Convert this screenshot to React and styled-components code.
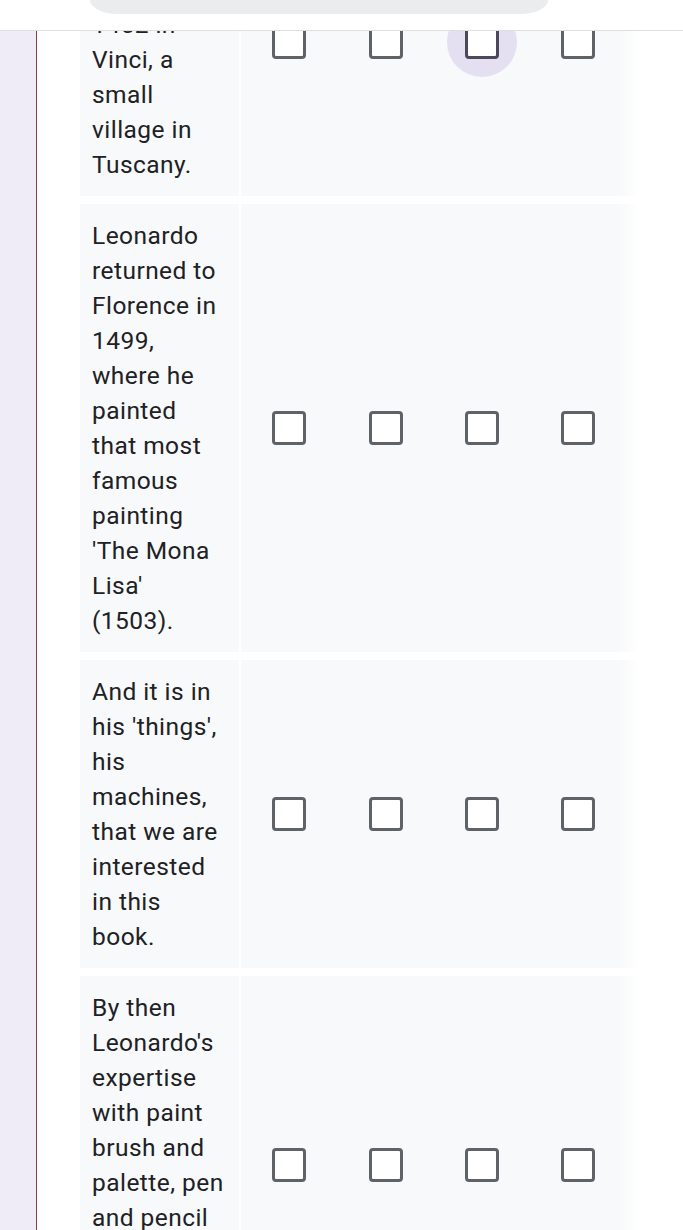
import React, { useLayoutEffect, useRef } from 'react'
import styled, { createGlobalStyle } from 'styled-components'

const GlobalStyle = createGlobalStyle`
  html, body {
    margin: 0;
    padding: 0;
    background: #fff;
  }
  body {
    font-family: Roboto, "Noto Sans", "Liberation Sans", sans-serif;
    color: #202124;
  }
`

const rows = [
    { text: 'Leonardo was born on 15 April 1452 in Vinci, a small village in Tuscany.', hover: 2 },
    { text: "Leonardo returned to Florence in 1499, where he painted that most famous painting 'The Mona Lisa' (1503)." },
    { text: "And it is in his 'things', his machines, that we are interested in this book." },
    { text: "By then Leonardo's expertise with paint brush and palette, pen and pencil was already remarkable." },
]

const columns = ['True', 'False', 'Not given', 'Unsure']

const Screen = styled.div`
    width: 683px;
    height: 1230px;
    overflow: hidden;
    display: flex;
    flex-direction: column;
    background: #fff;
`

const TopBar = styled.header`
    flex: none;
    height: 30px;
    display: flex;
    padding-left: 90px;
    background: #fff;
    border-bottom: 1px solid #dedfe1;
`

const SearchPill = styled.div`
    width: 458px;
    height: 14px;
    background: #ebecee;
    border-radius: 0 0 28px 28px / 0 0 14px 14px;
`

const Body = styled.div`
    flex: 1;
    min-height: 0;
    display: flex;
`

const Rail = styled.div`
    flex: none;
    width: 36px;
    background: #efebf7;
`

const Card = styled.main`
    flex: 1;
    position: relative;
    overflow: hidden;
    background: #fff;
    border-left: 1px solid #84403a;
`

const Content = styled.div`
    display: flex;
    flex-direction: column;
    gap: 8px;
    padding: 24px 0 200px 43px;
`

const Title = styled.h2`
    margin: 0 0 16px;
    font-size: 28px;
    font-weight: 400;
    line-height: 40px;
`

const Row = styled.div`
    display: flex;
    gap: 2px;
`

const Label = styled.div`
    flex: none;
    box-sizing: border-box;
    width: 159px;
    padding: ${p => (p.$head ? '10px 14px 10px 12px' : '14px 14px 14px 12px')};
    background: ${p => (p.$head ? '#fff' : '#f8f9fa')};
    font-size: 24.5px;
    line-height: 35px;
    letter-spacing: 0.45px;
`

const Checks = styled.div`
    flex: none;
    width: 399px;
    display: grid;
    grid-template-columns: repeat(4, 96.4px);
    align-items: center;
    justify-items: center;
    background: ${p => (p.$head ? '#fff' : 'linear-gradient(to right, #f8f9fa 378px, #fff 399px)')};
`

const ColumnHead = styled.span`
    font-size: 21px;
    line-height: 30px;
    text-align: center;
    color: #202124;
`

const Ripple = styled.div`
    width: 70px;
    height: 70px;
    display: grid;
    place-items: center;
    border-radius: 50%;
    background: ${p => (p.$hover ? '#e4e0f2' : 'transparent')};
`

const Box = styled.div`
    box-sizing: border-box;
    width: 34px;
    height: 34px;
    border: 3.5px solid ${p => (p.$hover ? '#4c4858' : '#5f6368')};
    border-radius: 4px;
    background: #fff;
`

export default function App() {
    const cardRef = useRef(null)
    const firstRowRef = useRef(null)

    // the reference is scrolled so that the first row starts 143px above the card's top
    useLayoutEffect(() => {
        if (cardRef.current && firstRowRef.current) {
            cardRef.current.scrollTop = firstRowRef.current.offsetTop + 143
        }
    }, [])

    return (
        <>
            <GlobalStyle />
            <Screen>
                <TopBar>
                    <SearchPill />
                </TopBar>
                <Body>
                    <Rail />
                    <Card ref={cardRef}>
                        <Content>
                            <Title>Read the text and tick a box for each sentence.</Title>
                            <Row>
                                <Label $head />
                                <Checks $head>
                                    {columns.map(c => (
                                        <ColumnHead key={c}>{c}</ColumnHead>
                                    ))}
                                </Checks>
                            </Row>
                            {rows.map((row, i) => (
                                <Row key={i} ref={i === 0 ? firstRowRef : undefined}>
                                    <Label>{row.text}</Label>
                                    <Checks>
                                        {columns.map((c, j) => (
                                            <Ripple key={c} $hover={row.hover === j}>
                                                <Box $hover={row.hover === j} />
                                            </Ripple>
                                        ))}
                                    </Checks>
                                </Row>
                            ))}
                        </Content>
                    </Card>
                </Body>
            </Screen>
        </>
    )
}
